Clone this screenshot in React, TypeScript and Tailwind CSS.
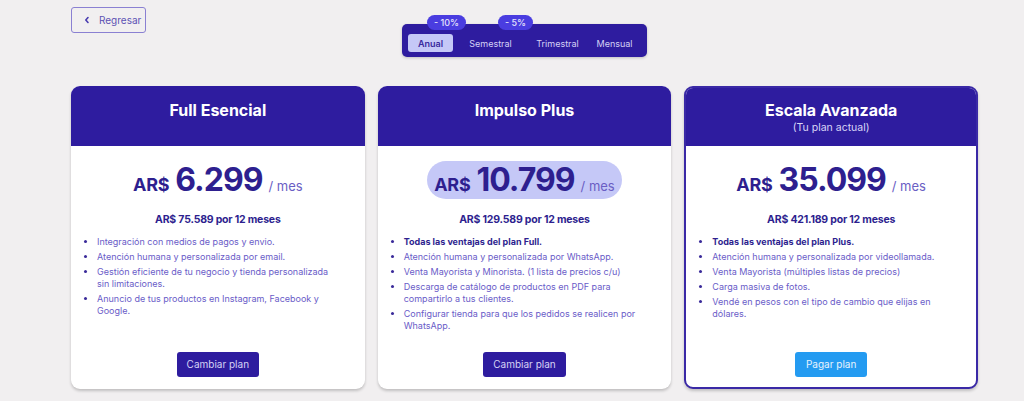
import React, { useState } from 'react';

type Plan = {
  name: string;
  current?: boolean;
  price: string;
  total: string;
  highlight?: boolean;
  features: { text: string; bold?: boolean }[];
  action: string;
};

const plans: Plan[] = [
  {
    name: 'Full Esencial',
    price: '6.299',
    total: 'AR$ 75.589 por 12 meses',
    features: [
      { text: 'Integración con medios de pagos y envio.' },
      { text: 'Atención humana y personalizada por email.' },
      { text: 'Gestión eficiente de tu negocio y tienda personalizada sin limitaciones.' },
      { text: 'Anuncio de tus productos en Instagram, Facebook y Google.' },
    ],
    action: 'Cambiar plan',
  },
  {
    name: 'Impulso Plus',
    price: '10.799',
    total: 'AR$ 129.589 por 12 meses',
    highlight: true,
    features: [
      { text: 'Todas las ventajas del plan Full.', bold: true },
      { text: 'Atención humana y personalizada por WhatsApp.' },
      { text: 'Venta Mayorista y Minorista. (1 lista de precios c/u)' },
      { text: 'Descarga de catálogo de productos en PDF para compartirlo a tus clientes.' },
      { text: 'Configurar tienda para que los pedidos se realicen por WhatsApp.' },
    ],
    action: 'Cambiar plan',
  },
  {
    name: 'Escala Avanzada',
    current: true,
    price: '35.099',
    total: 'AR$ 421.189 por 12 meses',
    features: [
      { text: 'Todas las ventajas del plan Plus.', bold: true },
      { text: 'Atención humana y personalizada por videollamada.' },
      { text: 'Venta Mayorista (múltiples listas de precios)' },
      { text: 'Carga masiva de fotos.' },
      { text: 'Vendé en pesos con el tipo de cambio que elijas en dólares.' },
    ],
    action: 'Pagar plan',
  },
];

// anchos fijos para que las etiquetas queden donde están en el diseño
const periods = [
  { label: 'Anual', width: 'w-[45px]', badge: '- 10%', badgePos: 'left-[19px]' },
  { label: 'Semestral', width: 'w-[75px]', badge: '- 5%', badgePos: 'left-[45px]' },
  { label: 'Trimestral', width: 'w-[59px]' },
  { label: 'Mensual', width: 'w-[55px]' },
];

function PlanCard({ plan }: { plan: Plan }) {
  return (
    <div
      className={
        'flex flex-col bg-white rounded-[9px] overflow-hidden shadow-[0_2px_3px_rgba(0,0,0,0.2)] h-[303px] ' +
        (plan.current ? 'border-2 border-[#3a29a6]' : '')
      }
    >
      <div
        className={
          'bg-[#2e1c9f] shrink-0 flex flex-col items-center text-white ' +
          (plan.current ? 'h-[58px] pt-[11px]' : 'h-[60px] pt-[13px]')
        }
      >
        <h2 className="text-[16px] font-bold leading-[22px]">{plan.name}</h2>
        {plan.current && <span className="text-[10.5px] leading-[13px] text-[#d9d6f7]">(Tu plan actual)</span>}
      </div>
      <div className={'flex flex-col items-center flex-1 pt-[15px] ' + (plan.current ? 'pb-[10px]' : 'pb-[12px]')}>
        <div
          className={
            'flex items-baseline gap-[6px] h-[38px] rounded-full px-[7px] ' +
            (plan.highlight ? 'bg-[#c5c8f7]' : '')
          }
        >
          <span className="text-[18px] font-bold text-[#2e1f8f] leading-none tracking-[-0.3px]">AR$</span>
          <span className="text-[32px] font-bold text-[#2e1f8f] leading-[38px] tracking-[-1px]">{plan.price}</span>
          <span className="text-[13px] text-[#6a5ec4] leading-none">/ mes</span>
        </div>
        <p className="mt-[14px] text-[10.5px] font-bold text-[#2e1f8f] leading-[14px] tracking-[-0.2px]">{plan.total}</p>
        <ul className="mt-[9px] self-stretch pl-[26px] pr-[24px] flex flex-col gap-[3px] list-disc marker:text-[#3a2a99]">
          {plan.features.map((f) => (
            <li
              key={f.text}
              className={
                'text-[9px] leading-[12px] ' +
                (f.bold ? 'font-bold text-[#2e1f8f]' : 'text-[#6a5cc8]')
              }
            >
              {f.text}
            </li>
          ))}
        </ul>
        <div className="flex-1" />
        <button
          className={
            'h-[25px] rounded-[3px] text-[10px] ' +
            (plan.current ? 'bg-[#249bf1] text-[#e8f3fd] px-[11px]' : 'bg-[#2e1c9f] text-[#d6d3f5] px-[10px]')
          }
        >
          {plan.action}
        </button>
      </div>
    </div>
  );
}

export default function App() {
  const [period, setPeriod] = useState('Anual');

  return (
    <div className="min-h-screen bg-[#f1eff0] font-['Inter','Liberation_Sans',sans-serif] pl-[71px] pt-[7px]">
      <div className="w-[907px]">
        <button className="flex items-center gap-[9px] h-[26px] w-[75px] pl-[12px] border border-[#8a80d2] rounded-[3px] text-[10px] text-[#5d52b4]">
          <svg width="6" height="8" viewBox="0 0 6 8" fill="none">
            <path d="M4 1.5L1.8 4L4 6.5" stroke="#4a3db0" strokeWidth="1.6" strokeLinecap="round" strokeLinejoin="round" />
          </svg>
          Regresar
        </button>

        <div className="flex justify-center -mt-[9px]">
          <div className="flex items-center bg-[#2e1c9f] rounded-[5px] h-[33px] pl-[6px] pr-[5px] shadow-[0_1px_3px_rgba(0,0,0,0.2)]">
            {periods.map((p) => (
              <div key={p.label} className="relative">
                {p.badge && (
                  <span
                    className={
                      'absolute -top-[14px] whitespace-nowrap bg-[#4a3de0] text-[#e4e2fb] text-[9px] font-medium leading-[15px] px-[7px] rounded-full ' +
                      p.badgePos
                    }
                  >
                    {p.badge}
                  </span>
                )}
                <button
                  onClick={() => setPeriod(p.label)}
                  className={
                    'h-[18px] rounded-[3px] text-[9px] ' +
                    p.width +
                    ' ' +
                    (period === p.label
                      ? 'bg-[#c5c8f7] text-[#3a2a9e] font-semibold'
                      : 'text-[#d4d1f5]')
                  }
                >
                  {p.label}
                </button>
              </div>
            ))}
          </div>
        </div>

        <div className="grid grid-cols-3 gap-[13px] mt-[29px]">
          {plans.map((p) => (
            <PlanCard key={p.name} plan={p} />
          ))}
        </div>
      </div>
    </div>
  );
}
